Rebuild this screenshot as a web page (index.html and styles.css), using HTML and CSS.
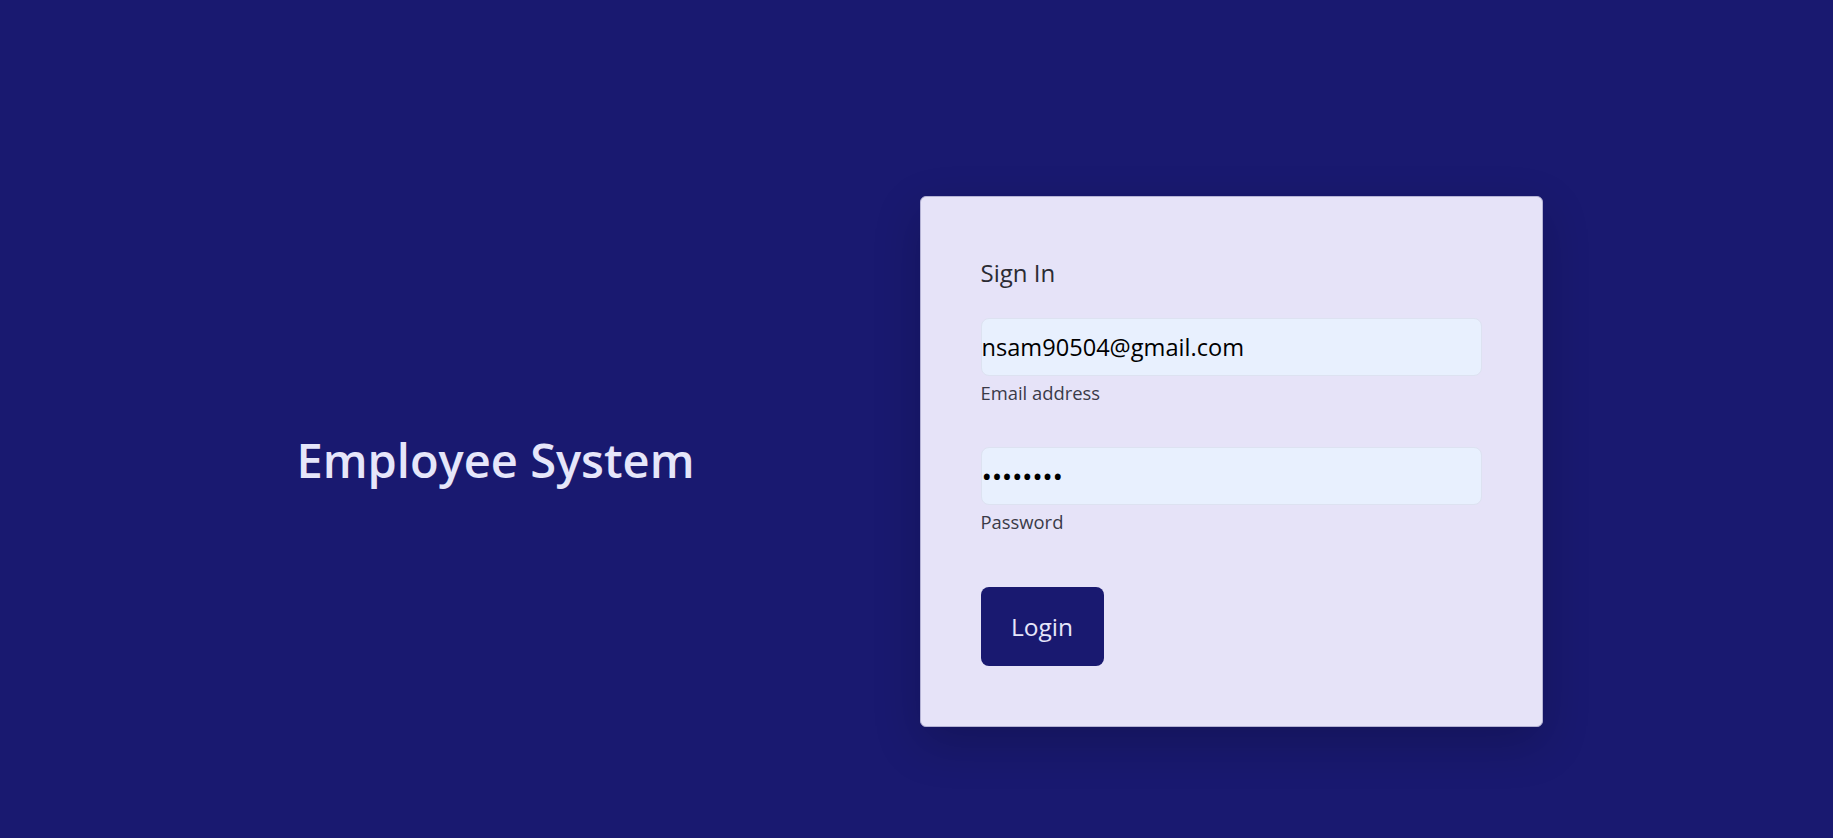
FILE: index.html
```html
<!DOCTYPE html>
<html lang="en">
<head>
<meta charset="utf-8">
<title>Employee System</title>
<link rel="stylesheet" href="styles.css">
</head>
<body>
<main class="page">
  <section class="brand">
    <h1 class="brand-title">Employee System</h1>
  </section>
  <section class="card">
    <h2 class="card-title">Sign In</h2>
    <form class="form">
      <div class="field">
        <input class="field-input" type="email" value="nsam90504@gmail.com">
        <label class="field-label">Email address</label>
      </div>
      <div class="field field-gap">
        <input class="field-input field-password" type="password" value="12345678">
        <label class="field-label">Password</label>
      </div>
      <button class="btn" type="button">Login</button>
    </form>
  </section>
</main>
</body>
</html>
```
FILE: styles.css
```css
html, body {
  margin: 0;
  padding: 0;
}
body {
  background: #191970;
  font-family: "Open Sans", "Noto Sans", sans-serif;
  min-height: 838px;
}
.page {
  display: flex;
  align-items: center;
  padding: 196px 0 0 200px;
}
.brand {
  width: 591px;
  flex: none;
  text-align: center;
  margin-right: 128.5px;
  padding-bottom: 4px;
}
.brand-title {
  margin: 0;
  color: #e6e6fa;
  font-size: 47px;
  font-weight: 600;
  line-height: 60px;
}
.card {
  width: 501px;
  flex: none;
  background: #e6e3f8;
  border: 1px solid #b4b2d4;
  border-radius: 6px;
  padding: 60px;
  box-shadow: 0 1rem 3rem rgba(0, 0, 0, 0.2);
}
.card-title {
  margin: 0;
  font-size: 24px;
  font-weight: 400;
  line-height: 32px;
  color: #2b2b33;
}
.form {
  margin-top: 29px;
  display: flex;
  flex-direction: column;
  align-items: flex-start;
}
.field {
  width: 100%;
  display: flex;
  flex-direction: column;
}
.field-gap {
  margin-top: 42px;
}
.field-input {
  box-sizing: border-box;
  width: 100%;
  height: 58px;
  margin: 0;
  padding: 0;
  border: 1px solid #dde2f1;
  border-radius: 8px;
  background: #e8f0fe;
  font-family: inherit;
  font-size: 23.6px;
  color: #000;
  outline: none;
}
.field-password {
  font-size: 28px;
  letter-spacing: -0.4px;
}
.field-label {
  margin-top: 5px;
  font-size: 18.4px;
  line-height: 24px;
  color: #3a3a48;
}
.btn {
  margin-top: 53px;
  width: 123px;
  height: 79px;
  border: none;
  border-radius: 8px;
  background: #191970;
  color: #e6e6fa;
  font-family: inherit;
  font-size: 24.5px;
  padding: 0;
  cursor: pointer;
}
```
